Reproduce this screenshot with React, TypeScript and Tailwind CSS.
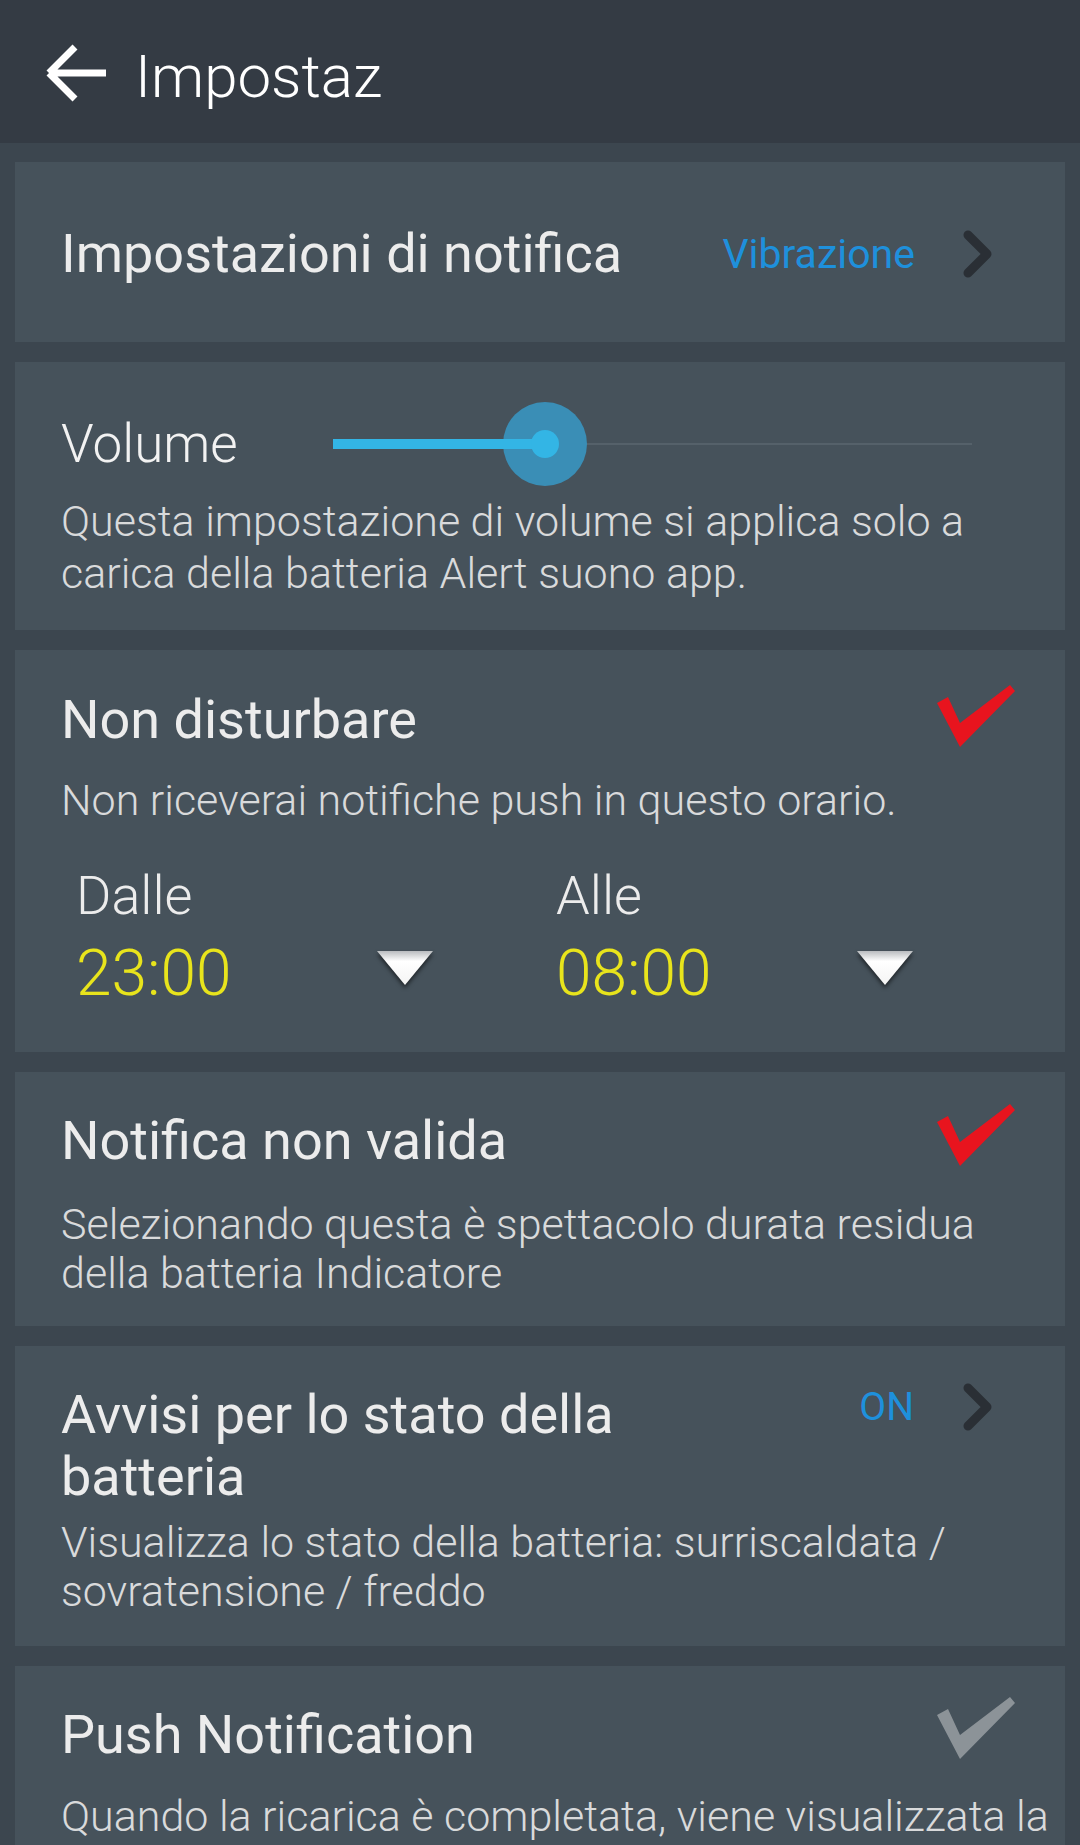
import React from 'react';

function Chevron({ className = '' }: { className?: string }) {
    return (
        <svg viewBox="0 0 32 50" className={`w-[32px] h-[50px] shrink-0 ${className}`}>
            <polyline
                points="6,6 25,25 6,44"
                fill="none"
                stroke="#2a2f35"
                strokeWidth="9"
                strokeLinecap="round"
                strokeLinejoin="round"
            />
        </svg>
    );
}

function Check({ color, className = '' }: { color: string; className?: string }) {
    return (
        <svg viewBox="0 0 78 62" className={`w-[78px] h-[62px] shrink-0 ${className}`}>
            <path d="M0 18 L11 12 L23 38 L73 0 L78 6 L23 62 Z" fill={color} />
        </svg>
    );
}

function Triangle() {
    return (
        <svg viewBox="0 0 56 34" className="w-[56px] h-[34px] shrink-0 drop-shadow-[0_3px_2px_rgba(0,0,0,0.55)]">
            <defs>
                <linearGradient id="tri" x1="0" y1="0" x2="0" y2="1">
                    <stop offset="0" stopColor="#b9bcbf" />
                    <stop offset="0.3" stopColor="#ffffff" />
                    <stop offset="1" stopColor="#f4f4f4" />
                </linearGradient>
            </defs>
            <polygon points="0,0 56,0 28,34" fill="url(#tri)" />
        </svg>
    );
}

function TitleRow({ title, children }: { title: string; children?: React.ReactNode }) {
    return (
        <div className="flex items-center justify-between">
            <span className="text-[54px] leading-[62px] text-[#ececec]">{title}</span>
            {children}
        </div>
    );
}

export default function App() {
    return (
        <div className="h-[1845px] overflow-hidden bg-[#3c464f] font-['Roboto','Liberation_Sans',sans-serif]">
            {/* Toolbar */}
            <header className="h-[143px] bg-[#343b44] flex items-center pt-[11px]">
                <svg viewBox="0 0 62 60" className="ml-[45px] w-[62px] h-[60px] -mt-[8px]">
                    <path
                        d="M4 30 H61 M4 30 L30 4 M4 30 L30 56"
                        fill="none"
                        stroke="#ffffff"
                        strokeWidth="7"
                    />
                </svg>
                <span className="ml-[28px] text-[60px] leading-none font-light text-white">Impostaz</span>
            </header>

            <div className="flex flex-col gap-[20px] px-[15px] pt-[19px]">
                {/* Notification settings */}
                <div className="h-[180px] bg-[#46525b] flex items-center pl-[46px] pr-[10px] pt-[4px]">
                    <span className="text-[54px] leading-[62px] text-[#ececec]">Impostazioni di notifica</span>
                    <span className="ml-auto text-[41px] leading-none text-[#1e90dc]">Vibrazione</span>
                    <Chevron className="ml-[47px] mr-[61px]" />
                </div>

                {/* Volume */}
                <div className="h-[268px] bg-[#46525b] pl-[46px] pr-[10px] pt-[40px]">
                    <div className="flex items-center h-[84px]">
                        <span className="w-[272px] shrink-0 text-[53px] leading-none font-light text-[#f2f2f2]">Volume</span>
                        <div className="relative flex-1 h-[84px] mr-[83px]">
                            <div className="absolute left-0 right-0 top-[41px] h-[2px] bg-[#55616a]" />
                            <div className="absolute left-[170px] top-0 w-[84px] h-[84px] rounded-full bg-[#3a8eb6]" />
                            <div className="absolute left-0 top-[37px] h-[10px] w-[212px] bg-[#33b5e5]" />
                            <div className="absolute left-[198px] top-[28px] w-[28px] h-[28px] rounded-full bg-[#33b5e5]" />
                        </div>
                    </div>
                    <p className="mt-[9px] text-[43px] leading-[52px] font-light text-[#d9dadb]">
                        Questa impostazione di volume si applica solo a carica della batteria Alert suono app.
                    </p>
                </div>

                {/* Do not disturb */}
                <div className="h-[402px] bg-[#46525b] pl-[46px] pr-[10px] pt-[35px]">
                    <TitleRow title="Non disturbare">
                        <Check color="#e8141e" className="mr-[40px] mb-[8px]" />
                    </TitleRow>
                    <p className="mt-[19px] text-[43px] leading-[52px] font-light text-[#d9dadb]">
                        Non riceverai notifiche push in questo orario.
                    </p>
                    <div className="grid grid-cols-[480px_480px] ml-[15px] mt-[39px]">
                        {[
                            { label: 'Dalle', time: '23:00' },
                            { label: 'Alle', time: '08:00' },
                        ].map(item => (
                            <div key={item.label} className="flex flex-col">
                                <span className="text-[54px] leading-[62px] font-light text-[#ececec]">{item.label}</span>
                                <div className="flex items-center mt-[11px]">
                                    <span className="w-[301px] text-[64px] leading-[72px] font-light text-[#e8e41c]">{item.time}</span>
                                    <div className="mb-[12px]">
                                        <Triangle />
                                    </div>
                                </div>
                            </div>
                        ))}
                    </div>
                </div>

                {/* Invalid notification */}
                <div className="h-[254px] bg-[#46525b] pl-[46px] pr-[10px] pt-[32px]">
                    <TitleRow title="Notifica non valida">
                        <Check color="#e8141e" className="mr-[40px] mb-[12px]" />
                    </TitleRow>
                    <p className="mt-[22px] text-[43px] leading-[49px] font-light text-[#d9dadb]">
                        Selezionando questa è spettacolo durata residua della batteria Indicatore
                    </p>
                </div>

                {/* Battery status alerts */}
                <div className="h-[300px] bg-[#46525b] pl-[46px] pr-[10px] pt-[38px]">
                    <div className="flex items-start">
                        <span className="w-[640px] text-[54px] leading-[62px] text-[#ececec]">Avvisi per lo stato della batteria</span>
                        <div className="ml-auto flex items-center mt-[-2px]">
                            <span className="text-[39px] leading-[50px] text-[#1e90dc]">ON</span>
                            <Chevron className="ml-[48px] mr-[61px]" />
                        </div>
                    </div>
                    <p className="mt-[10px] text-[43px] leading-[49px] font-light text-[#d9dadb]">
                        Visualizza lo stato della batteria: surriscaldata / sovratensione / freddo
                    </p>
                </div>

                {/* Push notification */}
                <div className="bg-[#46525b] pl-[46px] pr-[10px] pt-[31px] pb-[30px]">
                    <TitleRow title="Push Notification">
                        <Check color="#8c9398" className="mr-[40px] mb-[14px]" />
                    </TitleRow>
                    <p className="mt-[19px] text-[43px] leading-[49px] font-light text-[#d9dadb]">
                        Quando la ricarica è completata, viene visualizzata la notifica.
                    </p>
                </div>
            </div>
        </div>
    );
}
